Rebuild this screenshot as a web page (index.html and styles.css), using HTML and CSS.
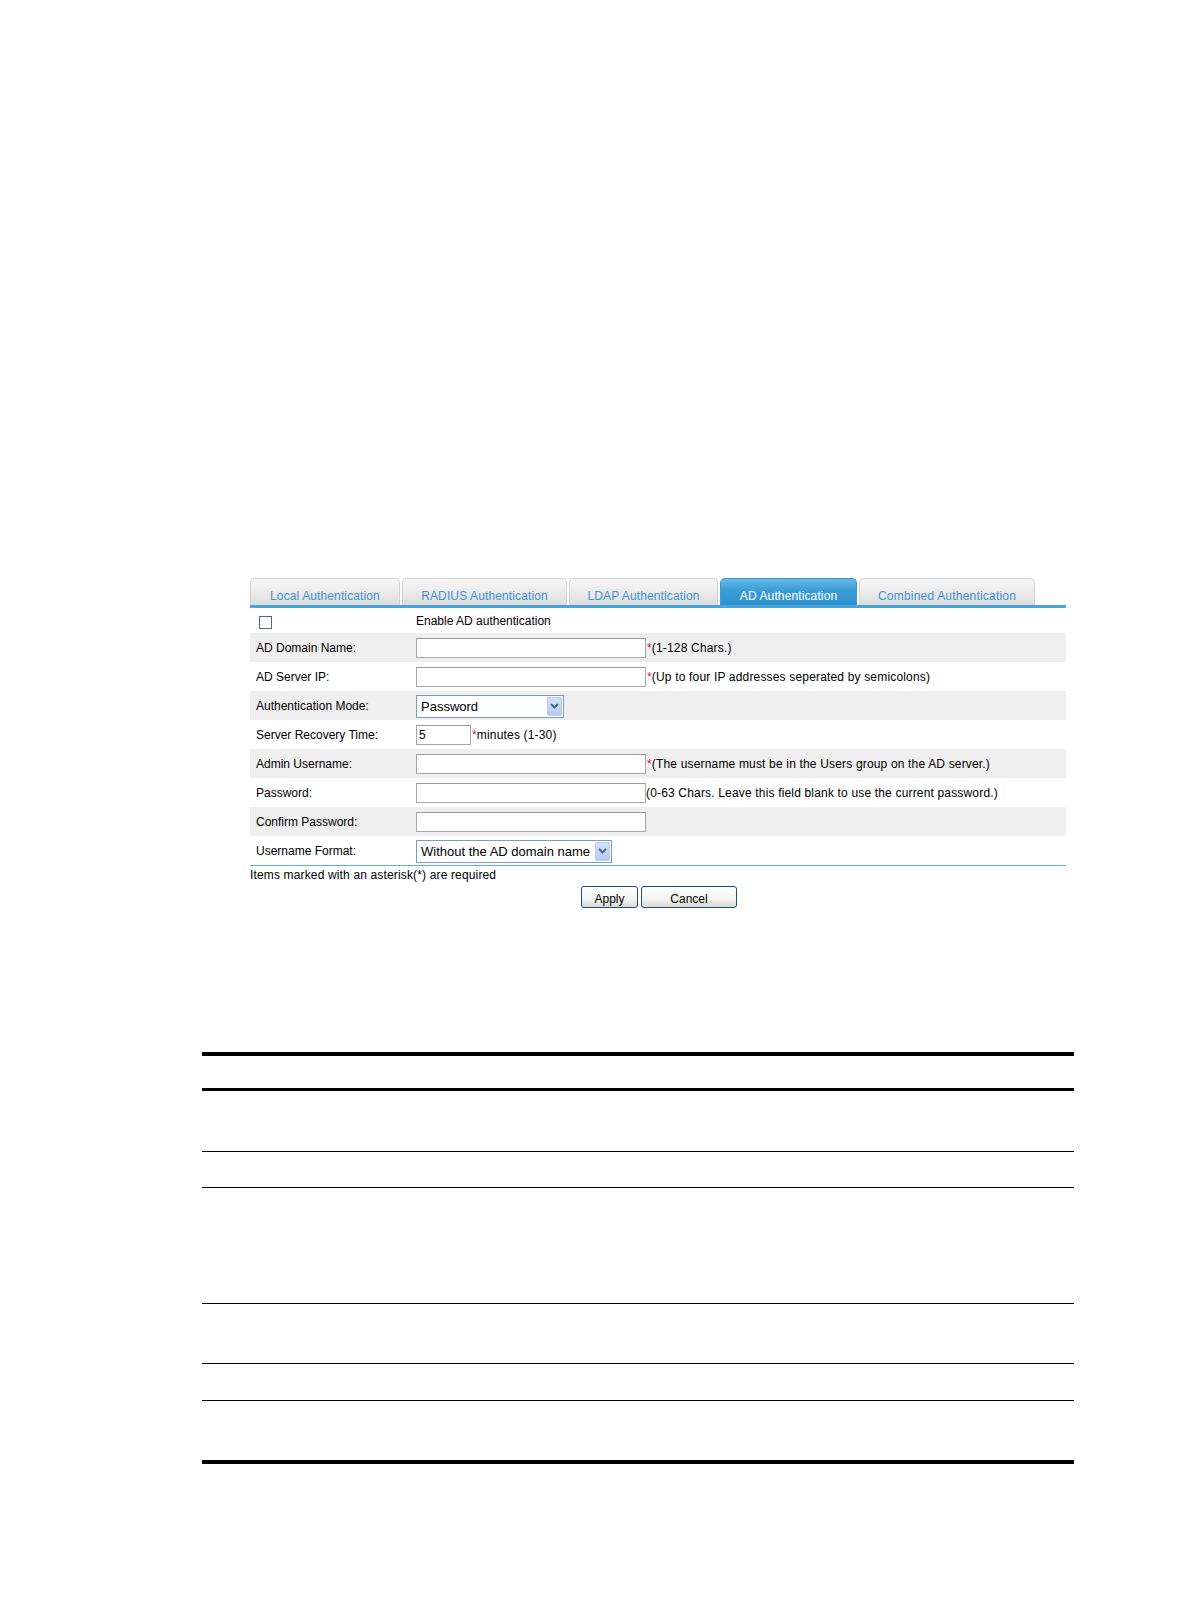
FILE: index.html
```html
<!DOCTYPE html>
<html>
<head>
<meta charset="utf-8">
<title>AD Authentication</title>
<link rel="stylesheet" href="styles.css">
</head>
<body>
<div class="page">
  <div class="figure">
    <div class="tabs">
      <div class="tab tab-local">Local Authentication</div>
      <div class="tab tab-radius">RADIUS Authentication</div>
      <div class="tab tab-ldap">LDAP Authentication</div>
      <div class="tab tab-ad active">AD Authentication</div>
      <div class="tab tab-combined">Combined Authentication</div>
    </div>
    <div class="tabbar"></div>
    <div class="form">
      <div class="row row-check">
        <div class="label"><span class="checkbox"></span></div>
        <div class="field">Enable AD authentication</div>
      </div>
      <div class="row gray">
        <div class="label">AD Domain Name:</div>
        <div class="field"><span class="input wide"></span><span class="hint"><span class="req">*</span>(1-128 Chars.)</span></div>
      </div>
      <div class="row">
        <div class="label">AD Server IP:</div>
        <div class="field"><span class="input wide"></span><span class="hint"><span class="req">*</span>(Up to four IP addresses seperated by semicolons)</span></div>
      </div>
      <div class="row gray">
        <div class="label">Authentication Mode:</div>
        <div class="field">
          <span class="select sel-mode"><span class="sel-text">Password</span><span class="sel-btn"><svg width="9" height="6" viewBox="0 0 9 6"><path d="M1 1 L4.5 4.5 L8 1" fill="none" stroke="#4a5f86" stroke-width="1.8"/></svg></span></span>
        </div>
      </div>
      <div class="row">
        <div class="label">Server Recovery Time:</div>
        <div class="field"><span class="input short">5</span><span class="hint"><span class="req">*</span>minutes (1-30)</span></div>
      </div>
      <div class="row gray">
        <div class="label">Admin Username:</div>
        <div class="field"><span class="input wide"></span><span class="hint"><span class="req">*</span>(The username must be in the Users group on the AD server.)</span></div>
      </div>
      <div class="row">
        <div class="label">Password:</div>
        <div class="field"><span class="input wide"></span><span class="hint">(0-63 Chars. Leave this field blank to use the current password.)</span></div>
      </div>
      <div class="row gray">
        <div class="label">Confirm Password:</div>
        <div class="field"><span class="input wide"></span></div>
      </div>
      <div class="row last">
        <div class="label">Username Format:</div>
        <div class="field">
          <span class="select sel-format"><span class="sel-text">Without the AD domain name</span><span class="sel-btn"><svg width="9" height="6" viewBox="0 0 9 6"><path d="M1 1 L4.5 4.5 L8 1" fill="none" stroke="#4a5f86" stroke-width="1.8"/></svg></span></span>
        </div>
      </div>
    </div>
    <div class="note">Items marked with an asterisk(*) are required</div>
    <div class="buttons">
      <span class="btn btn-apply">Apply</span>
      <span class="btn btn-cancel">Cancel</span>
    </div>
  </div>

  <div class="doctable">
    <div class="trow thead"></div>
    <div class="trow r1"></div>
    <div class="trow r2"></div>
    <div class="trow r3"></div>
    <div class="trow r4"></div>
    <div class="trow r5"></div>
    <div class="trow r6 lastrow"></div>
  </div>
</div>
</body>
</html>
```
FILE: styles.css
```css
html, body {
  margin: 0;
  padding: 0;
  background: #ffffff;
}
body {
  font-family: "Liberation Sans", Arial, sans-serif;
  font-size: 12px;
  color: #000;
}
.page {
  width: 1190px;
  height: 1616px;
  padding-top: 578px;
  box-sizing: border-box;
}
.figure {
  margin-left: 250px;
  width: 816px;
}
.tabs {
  display: flex;
  gap: 2px;
  height: 27px;
  align-items: flex-end;
}
.tab {
  height: 27px;
  box-sizing: border-box;
  padding-top: 10px;
  line-height: 14px;
  text-align: center;
  color: #3f93d1;
  border: 1px solid #d2d2d2;
  border-bottom: none;
  border-radius: 5px 5px 0 0;
  background: linear-gradient(#f7f7f7, #e6e6e6 70%, #dcdcdc);
  white-space: nowrap;
  letter-spacing: 0.12px;
}
.tab-local { width: 150px; }
.tab-radius { width: 165px; }
.tab-ldap { width: 149px; }
.tab-ad { width: 137px; }
.tab-combined { width: 176px; text-align: left; padding-left: 18px; letter-spacing: 0.2px; }
.tab.active {
  color: #ffffff;
  border-color: #3f98d0;
  background: linear-gradient(#66b8e6, #3d9fd9 40%, #2f92cf);
}
.tabbar {
  height: 3px;
  background: #47a5da;
}
.form {
  display: flex;
  flex-direction: column;
}
.row {
  display: grid;
  grid-template-columns: 166px 1fr;
  align-items: center;
  height: 29px;
  padding-top: 1px;
  box-sizing: border-box;
}
.row-check {
  height: 25px;
}
.row.gray {
  background: #efefef;
}
.row.last {
  border-bottom: 1px solid #5db5d6;
  height: 30px;
}
.label {
  padding-left: 6px;
  display: flex;
  align-items: center;
}
.field {
  display: flex;
  align-items: center;
  white-space: nowrap;
}
.hint {
  letter-spacing: 0.17px;
}
.checkbox {
  display: inline-block;
  width: 11px;
  height: 11px;
  border: 1px solid #4b6a86;
  background: #fff;
  margin-left: 3px;
  margin-top: 2px;
}
.input {
  display: inline-block;
  box-sizing: border-box;
  height: 20px;
  border: 1px solid #a8a8a8;
  border-top-color: #9a9a9a;
  background: #fff;
  line-height: 18px;
  padding-left: 2px;
}
.input.wide { width: 230px; }
.input.short { width: 55px; }
.req {
  color: #e0141e;
  padding-left: 1px;
}
.select {
  display: inline-flex;
  align-items: center;
  box-sizing: border-box;
  height: 23px;
  border: 1px solid #7f9db9;
  background: #fff;
  font-size: 13px;
}
.sel-mode { width: 148px; }
.sel-format { width: 196px; }
.sel-text {
  flex: 1;
  padding-left: 4px;
  line-height: 21px;
}
.sel-btn {
  width: 15px;
  height: 19px;
  margin-right: 1px;
  box-sizing: border-box;
  border: 1px solid #b9cbf3;
  border-radius: 2px;
  background: linear-gradient(#d4e0fb, #b6caf4);
  display: flex;
  align-items: center;
  justify-content: center;
}
.note {
  line-height: 14px;
  padding-top: 2px;
  letter-spacing: 0.15px;
}
.buttons {
  display: flex;
  justify-content: center;
  gap: 3px;
  margin-top: 4px;
  padding-left: 2px;
}
.btn {
  display: inline-block;
  box-sizing: border-box;
  height: 22px;
  border: 1px solid #1d4d7e;
  border-radius: 3px;
  background: linear-gradient(#ffffff, #f3f3ef 60%, #dcdcd4);
  text-align: center;
  line-height: 22px;
  padding-top: 1px;
}
.btn-apply { width: 57px; }
.btn-cancel { width: 96px; }

.doctable {
  margin-top: 144px;
  margin-left: 202px;
  width: 872px;
  border-top: 4px solid #000;
  border-bottom: 4px solid #000;
}
.trow {
  border-bottom: 1px solid #000;
}
.trow.lastrow { border-bottom: none; }
.thead { height: 32px; border-bottom: 3px solid #000; }
.r1 { height: 60px; }
.r2 { height: 35px; }
.r3 { height: 115px; }
.r4 { height: 59px; }
.r5 { height: 36px; }
.r6 { height: 59px; }
```
